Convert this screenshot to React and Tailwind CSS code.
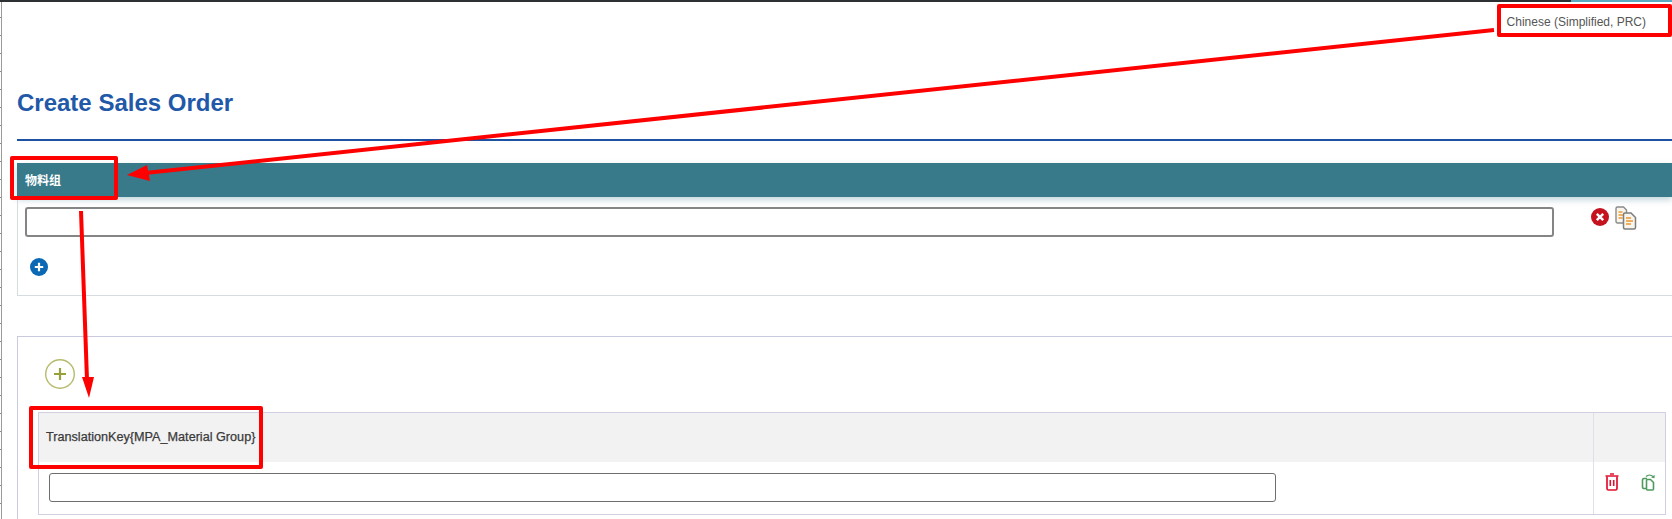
import React from "react";

function RedBox({ className }) {
  return <div className={"absolute border-[4px] border-[#ff0000] rounded-[2px] pointer-events-none " + className} />;
}

function XCircle() {
  return (
    <svg width="18" height="18" viewBox="0 0 18 18">
      <circle cx="9" cy="9" r="9" fill="#c5121f" />
      <path d="M5.800 5.800l6.400 6.400M12.200 5.800l-6.400 6.400" stroke="#fff" strokeWidth="2.400" />
    </svg>
  );
}

function CopyDocs() {
  return (
    <svg width="22" height="24" viewBox="0 0 22 24" fill="none">
      <path d="M2.500 1h6l3 3v13h-9a1.500 1.500 0 0 1-1.500-1.500V2.500A1.500 1.500 0 0 1 2.500 1z" fill="#f7f5ee" stroke="#8a8a8a" strokeWidth="1.400" />
      <path d="M3.500 6h4M3.500 9h5M3.500 12h4" stroke="#f0a030" strokeWidth="1.300" />
      <path d="M10 7h6l4.500 4.500v10a1.500 1.500 0 0 1-1.500 1.500h-9a1.500 1.500 0 0 1-1.500-1.500V8.500A1.500 1.500 0 0 1 10 7z" fill="#f7f5ee" stroke="#7d7d7d" strokeWidth="1.500" />
      <path d="M11 12h5M11 15h7M11 18h5" stroke="#f0962a" strokeWidth="1.500" />
    </svg>
  );
}

function BluePlus() {
  return (
    <svg width="18" height="18" viewBox="0 0 18 18">
      <circle cx="9" cy="9" r="9" fill="#0a68b4" />
      <path d="M9 4.800v8.400M4.800 9h8.400" stroke="#fff" strokeWidth="2.200" />
    </svg>
  );
}

function GreenPlus() {
  return (
    <svg width="30" height="32" viewBox="0 0 30 32" fill="none">
      <circle cx="15" cy="16" r="14.300" stroke="#b5bb6a" strokeWidth="1.400" />
      <path d="M15 10v12M9 16h12" stroke="#98a03a" strokeWidth="2.200" />
    </svg>
  );
}

function Trash() {
  return (
    <svg width="14" height="18" viewBox="0 0 14 18" fill="none">
      <path d="M5 1h4M0.500 3h13" stroke="#e0102f" strokeWidth="1.500" />
      <path d="M2 3.500v12a1.500 1.500 0 0 0 1.500 1.500h7a1.500 1.500 0 0 0 1.500-1.500v-12" stroke="#e0102f" strokeWidth="1.700" />
      <path d="M5.300 7v6M8.700 7v6" stroke="#e0102f" strokeWidth="1.600" />
    </svg>
  );
}

function GreenCopy() {
  return (
    <svg width="15" height="18" viewBox="0 0 15 18" fill="none">
      <path d="M6 5.500H3A1.500 1.500 0 0 0 1.500 7v7A1.500 1.500 0 0 0 3 15.500h2" stroke="#4c9a5c" strokeWidth="1.600" />
      <path d="M6.500 6.500h3l3 3v6.500a1 1 0 0 1-1 1h-5a1 1 0 0 1-1-1V7.500a1 1 0 0 1 1-1z" stroke="#4c9a5c" strokeWidth="1.600" />
      <path d="M5 3.500C7 1.500 10 1.500 12 3.500" stroke="#4c9a5c" strokeWidth="1.200" />
      <path d="M13.800 1.800l-.4 3.400-3.200-.6z" fill="#4c9a5c" />
    </svg>
  );
}

export default function App() {
  return (
    <div className="relative h-[519px] w-[1672px] overflow-hidden bg-white font-['Liberation_Sans',Arial,'Noto_Sans_CJK_SC',sans-serif]">
      {/* window strip along the top */}
      <div className="flex h-[2px]">
        <div className="flex-1 bg-[#2e3133]" />
        <div className="w-[101px] bg-[#5aa9c0]" />
      </div>

      <div className="flex h-[517px]">
        {/* ruler along the left */}
        <div className="w-[2px] shrink-0 border-r border-[#9a9a9a] bg-[repeating-linear-gradient(to_bottom,#ffffff_0,#ffffff_15px,#8c8c8c_15px,#8c8c8c_16px,#ffffff_16px,#ffffff_18px)]" />

        <div className="min-w-0 flex-1 pl-[15px]">
          <div className="flex h-[36px] justify-end pt-[11px] pr-[26px]">
            <span className="text-[12px] leading-[18px] text-[#555]">Chinese (Simplified, PRC)</span>
          </div>

          <h1 className="mt-[51px] text-[24px] leading-[28px] font-bold text-[#2158a8]">Create Sales Order</h1>

          <div className="mt-[22px] h-[2px] bg-[#1d52a3]" />

          <div className="mt-[22px] flex h-[34px] items-center bg-[#387a8a] pl-[8px] pt-[2px] shadow-[0_3px_6px_rgba(56,122,138,0.3)]">
            <span className="text-[12px] font-bold text-white">物料组</span>
          </div>

          <div className="h-[99px] border-b border-l border-[#d6dbe0] pl-[7px]">
            <div className="flex items-start pt-[10px]">
              <input className="h-[30px] w-[1529px] rounded-[3px] border-2 border-[#858585] bg-white" />
              <div className="ml-[37px] flex items-start">
                <div className="mt-[1px]"><XCircle /></div>
                <div className="ml-[6px] -mt-[1px]"><CopyDocs /></div>
              </div>
            </div>
            <div className="mt-[21px] ml-[5px] flex">
              <BluePlus />
            </div>
          </div>

          <div className="mt-[40px] h-[183px] border-t border-l border-[#c9c9df] pl-[20px]">
            <div className="pl-[7px] pt-[21px]">
              <GreenPlus />
            </div>
            <div className="mt-[22px] mr-[6px] border border-[#d0d0e2]">
              <div className="flex h-[49px]">
                <div className="flex flex-1 items-center bg-[#f2f2f2] pl-[7px]">
                  <span className="text-[12.650px] text-[#3a3a3a] [-webkit-text-stroke:0.25px_#3a3a3a]">TranslationKey{"{"}MPA_Material Group{"}"}</span>
                </div>
                <div className="w-[72px] border-l border-[#dfdfea] bg-[#f2f2f2]" />
              </div>
              <div className="flex h-[52px]">
                <div className="flex-1 pl-[10px] pt-[11px]">
                  <input className="h-[29px] w-[1227px] rounded-[3px] border border-[#6e6e6e] bg-white" />
                </div>
                <div className="flex w-[72px] items-start gap-[22px] border-l border-[#dfdfea] pl-[11px] pt-[11px]">
                  <Trash />
                  <GreenCopy />
                </div>
              </div>
            </div>
          </div>
        </div>
      </div>

      {/* review annotations drawn over the page */}
      <RedBox className="left-[1497px] top-[4px] h-[33px] w-[175px]" />
      <RedBox className="left-[10px] top-[156px] h-[44px] w-[108px]" />
      <RedBox className="left-[29px] top-[406px] h-[63px] w-[234px]" />
      <svg className="absolute left-0 top-0 pointer-events-none" width="1672" height="519" fill="none">
        <path d="M1494 30L145 173" stroke="#ff0000" strokeWidth="4" />
        <path d="M127 175L147 165L150 181Z" fill="#ff0000" />
        <path d="M81 211L87 380" stroke="#ff0000" strokeWidth="4" />
        <path d="M82 377L94 377L89 398Z" fill="#ff0000" />
      </svg>
    </div>
  );
}
